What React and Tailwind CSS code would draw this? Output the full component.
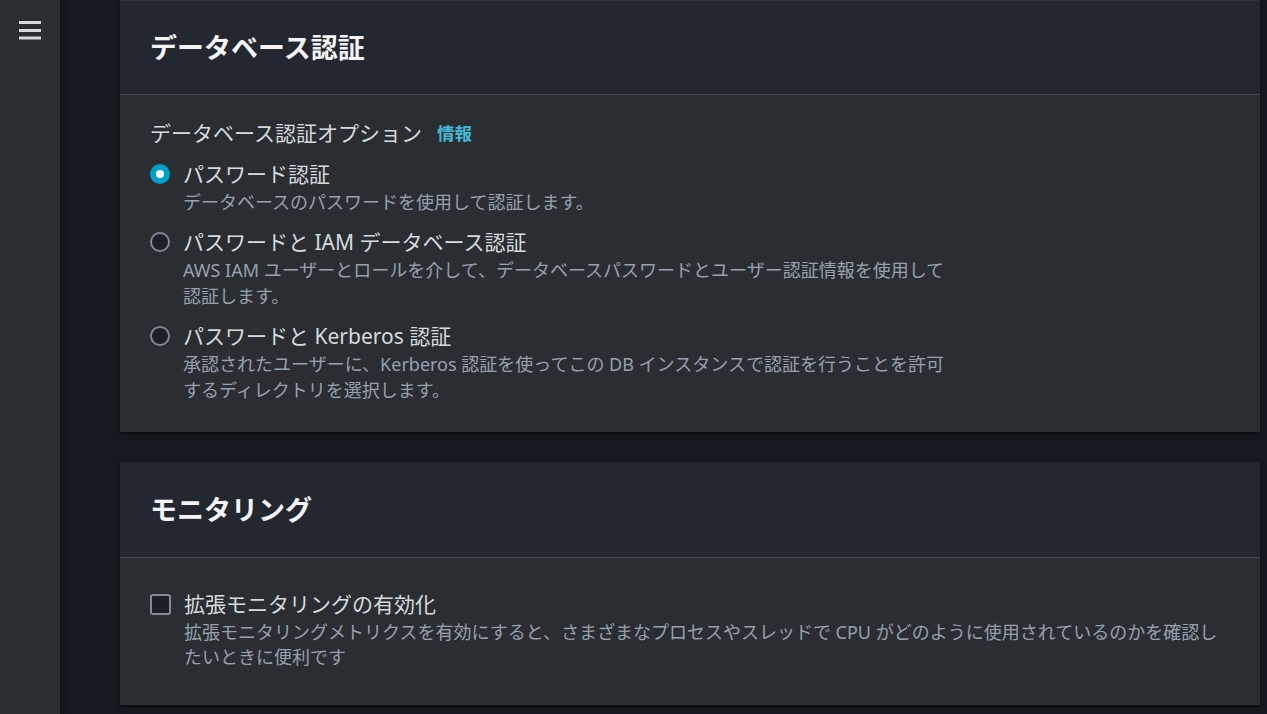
const font = "font-['Noto_Sans','Noto_Sans_CJK_JP',sans-serif]";

function Radio({ checked }) {
  if (checked) {
    return (
      <span className="mt-[4px] flex h-[20px] w-[20px] shrink-0 items-center justify-center rounded-full bg-[#00a1c9]">
        <span className="h-[8px] w-[8px] rounded-full bg-white" />
      </span>
    );
  }
  return (
    <span className="mt-[4px] h-[20px] w-[20px] shrink-0 rounded-full border-2 border-[#7f8b98] bg-[#1b1f27]" />
  );
}

const options = [
  {
    title: "パスワード認証",
    desc: ["データベースのパスワードを使用して認証します。"],
    checked: true,
  },
  {
    title: "パスワードと IAM データベース認証",
    desc: [
      "AWS IAM ユーザーとロールを介して、データベースパスワードとユーザー認証情報を使用して",
      "認証します。",
    ],
  },
  {
    title: "パスワードと Kerberos 認証",
    desc: [
      "承認されたユーザーに、Kerberos 認証を使ってこの DB インスタンスで認証を行うことを許可",
      "するディレクトリを選択します。",
    ],
  },
];

function CardHeader({ title, height }) {
  return (
    <div className={`flex items-center border-b border-[#414750] bg-[#232730] px-[30px] ${height}`}>
      <h2 className="text-[27px] font-bold leading-[34px] text-[#f2f3f3]">{title}</h2>
    </div>
  );
}

export default function App() {
  return (
    <div className={`flex h-[714px] w-full overflow-hidden bg-[#16191f] ${font}`}>
      {/* SIDEBAR */}
      <aside className="relative z-10 w-[60px] shrink-0 bg-[#2a2e33] shadow-[2px_0_6px_rgba(0,0,0,0.45)]">
        <svg className="ml-[19px] mt-[20px]" width="22" height="20" viewBox="0 0 22 20">
          <rect x="0" y="1" width="22" height="3" fill="#d5dbdb" />
          <rect x="0" y="9" width="22" height="3" fill="#d5dbdb" />
          <rect x="0" y="16.5" width="22" height="3" fill="#d5dbdb" />
        </svg>
      </aside>

      {/* MAIN */}
      <main className="flex flex-1 flex-col gap-[30px] pl-[60px] pr-[7px]">
        {/* DB AUTH */}
        <section className="border-t border-[#2f343b] bg-[#2a2e33] shadow-[0_2px_4px_rgba(0,0,0,0.6)]">
          <CardHeader title="データベース認証" height="h-[94px]" />
          <div className="px-[30px] pb-[29px] pt-[24px]">
            <div className="flex items-center gap-[15px] leading-[28px]">
              <span className="text-[21px] text-[#d5dbdb]">データベース認証オプション</span>
              <span className="text-[17.5px] font-bold text-[#44b9d6]">情報</span>
            </div>
            <div className="mt-[13px] flex flex-col gap-[13px]">
              {options.map((opt, i) => (
                <div key={i} className="flex gap-[13px]">
                  <Radio checked={opt.checked} />
                  <div>
                    <div className="text-[21px] leading-[28px] text-[#d5dbdb]">{opt.title}</div>
                    <div className="mt-px text-[18px] leading-[26px] text-[#95a1ad]">
                      {opt.desc.map((line, j) => (
                        <div key={j}>{line}</div>
                      ))}
                    </div>
                  </div>
                </div>
              ))}
            </div>
          </div>
        </section>

        {/* MONITORING */}
        <section className="bg-[#2a2e33] shadow-[0_2px_4px_rgba(0,0,0,0.6)]">
          <CardHeader title="モニタリング" height="h-[96px]" />
          <div className="px-[30px] pb-[35px] pt-[32px]">
            <div className="flex gap-[13px]">
              <span className="mt-[4px] h-[21px] w-[21px] shrink-0 rounded-[3px] border-2 border-[#7f8b98] bg-[#1b1f27]" />
              <div>
                <div className="text-[21px] leading-[28px] text-[#d5dbdb]">拡張モニタリングの有効化</div>
                <div className="mt-[2px] text-[18px] leading-[25px] text-[#95a1ad]">
                  <div>拡張モニタリングメトリクスを有効にすると、さまざまなプロセスやスレッドで CPU がどのように使用されているのかを確認し</div>
                  <div>たいときに便利です</div>
                </div>
              </div>
            </div>
          </div>
        </section>
      </main>
    </div>
  );
}
